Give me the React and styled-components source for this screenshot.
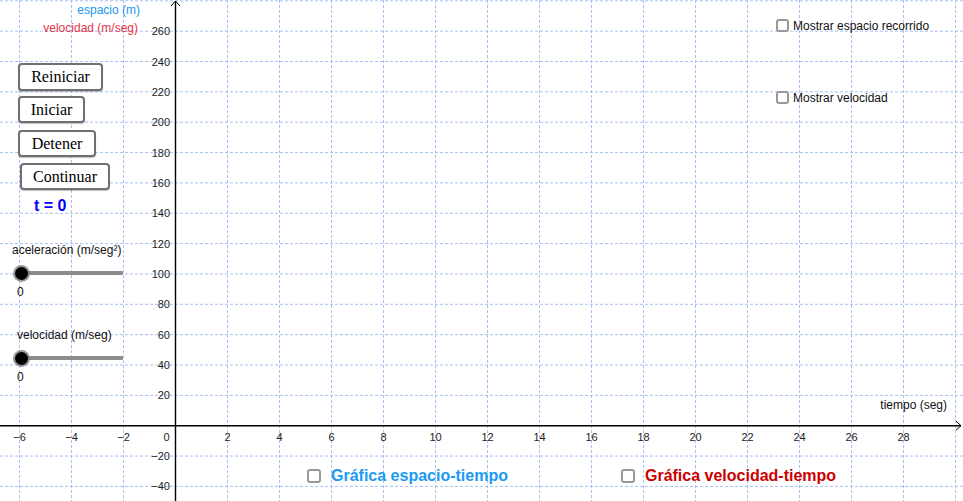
import styled, { createGlobalStyle } from "styled-components"

const GlobalStyle = createGlobalStyle`
    html, body {
        margin: 0;
        padding: 0;
        background: #ffffff;
    }
    body {
        font-family: "Liberation Sans", Arial, sans-serif;
    }
`

// graph geometry (px)
const OX = 175.5
const OY = 425.7
const X_STEP = 26      // px per second
const Y_STEP = 30.35 / 20 // px per metre

const xTicks = [-6, -4, -2, 2, 4, 6, 8, 10, 12, 14, 16, 18, 20, 22, 24, 26, 28, 30]
const yTicks = [-40, -20, 20, 40, 60, 80, 100, 120, 140, 160, 180, 200, 220, 240, 260, 280]

const fmt = (n) => (n < 0 ? "\u2212" + Math.abs(n) : String(n))

function Graph() {
    return (
        <GraphSvg width="963" height="501" viewBox="0 0 963 501">
            {xTicks.map((t) => {
                const x = OX + t * X_STEP
                return <GridLine key={"vx" + t} x1={x} y1={0} x2={x} y2={501} />
            })}
            {yTicks.map((t) => {
                const y = OY - t * Y_STEP
                return <GridLine key={"hy" + t} x1={0} y1={y} x2={963} y2={y} />
            })}

            <Axis x1={0} y1={OY} x2={961} y2={OY} />
            <Axis x1={OX} y1={1} x2={OX} y2={501} />
            <ArrowHead points={`${956},${OY - 4.5} ${961},${OY} ${956},${OY + 4.5}`} />
            <ArrowHead points={`${OX - 4.5},${6} ${OX},${1} ${OX + 4.5},${6}`} />

            {xTicks.filter((t) => t <= 28).map((t) => (
                <TickLabel key={"lx" + t} x={OX + t * X_STEP} y={441} textAnchor="middle">
                    {fmt(t)}
                </TickLabel>
            ))}
            <TickLabel x={166.5} y={441} textAnchor="middle">0</TickLabel>
            {yTicks.filter((t) => t <= 260).map((t) => (
                <TickLabel key={"ly" + t} x={170} y={OY - t * Y_STEP + 4} textAnchor="end">
                    {fmt(t)}
                </TickLabel>
            ))}

            <AxisName x={947} y={409} textAnchor="end">tiempo (seg)</AxisName>
            <AxisName x={140} y={14} textAnchor="end" fill="#2196f0">espacio (m)</AxisName>
            <AxisName x={138} y={32} textAnchor="end" fill="#e0384a">velocidad (m/seg)</AxisName>
        </GraphSvg>
    )
}

function Slider({ label, indent }) {
    return (
        <SliderBlock>
            <SliderLabel $indent={indent}>{label}</SliderLabel>
            <Track>
                <Knob />
            </Track>
            <SliderValue>0</SliderValue>
        </SliderBlock>
    )
}

function CheckItem({ children, $big, color }) {
    return (
        <CheckRow $big={$big}>
            <Box $big={$big} />
            <CheckText $big={$big} color={color}>{children}</CheckText>
        </CheckRow>
    )
}

function App() {
    return (
        <>
            <GlobalStyle />
            <Stage>
                <Graph />

                <ButtonPanel>
                    <ActionButton $w={85} $h={28}>Reiniciar</ActionButton>
                    <ActionButton $w={67} $gap={5}>Iniciar</ActionButton>
                    <ActionButton $w={78} $gap={7}>Detener</ActionButton>
                    <ActionButton $w={90} $gap={6} $shift={2}>Continuar</ActionButton>
                    <TimeText>t = 0</TimeText>
                </ButtonPanel>

                <SliderPanel>
                    <Slider label="aceleración (m/seg²)" indent={0} />
                    <Slider label="velocidad (m/seg)" indent={5} />
                </SliderPanel>

                <OptionPanel>
                    <CheckItem>Mostrar espacio recorrido</CheckItem>
                    <CheckItem>Mostrar velocidad</CheckItem>
                </OptionPanel>

                <GraphToggles>
                    <CheckItem $big color="#1a9af0">Gráfica espacio-tiempo</CheckItem>
                    <CheckItem $big color="#cc0000">Gráfica velocidad-tiempo</CheckItem>
                </GraphToggles>
            </Stage>
        </>
    )
}

const Stage = styled.div`
    position: relative;
    width: 963px;
    height: 501px;
    overflow: hidden;
    background: #ffffff;
`

const GraphSvg = styled.svg`
    position: absolute;
    left: 0;
    top: 0;
    display: block;
`

const GridLine = styled.line`
    stroke: #a9c0f2;
    stroke-width: 1;
    stroke-dasharray: 3 2;
`

const Axis = styled.line`
    stroke: #000000;
    stroke-width: 1.4;
`

const ArrowHead = styled.polyline`
    fill: none;
    stroke: #000000;
    stroke-width: 1;
`

const TickLabel = styled.text`
    font-family: "Liberation Sans", Arial, sans-serif;
    font-size: 11px;
    fill: #222222;
`

const AxisName = styled.text`
    font-family: "Liberation Sans", Arial, sans-serif;
    font-size: 12px;
    fill: ${(p) => p.fill || "#111111"};
`

const ButtonPanel = styled.div`
    position: absolute;
    left: 18px;
    top: 63px;
    display: flex;
    flex-direction: column;
    align-items: flex-start;
`

const ActionButton = styled.button`
    box-sizing: border-box;
    width: ${(p) => p.$w}px;
    height: ${(p) => p.$h || 27}px;
    margin-top: ${(p) => p.$gap || 0}px;
    margin-left: ${(p) => p.$shift || 0}px;
    padding: 0;
    background: #ffffff;
    border: 2px solid #707070;
    border-radius: 4px;
    box-shadow: 0 1px 1px rgba(0, 0, 0, 0.25);
    font-family: "Liberation Serif", "Times New Roman", serif;
    font-size: 16px;
    color: #000000;
    display: flex;
    align-items: center;
    justify-content: center;
`

const TimeText = styled.div`
    margin: 7px 0 0 16px;
    font-size: 16px;
    line-height: 18px;
    font-weight: bold;
    color: #0000ff;
`

const SliderPanel = styled.div`
    position: absolute;
    left: 12px;
    top: 243px;
    display: flex;
    flex-direction: column;
    gap: 29px;
`

const SliderBlock = styled.div`
    display: flex;
    flex-direction: column;
`

const SliderLabel = styled.div`
    margin-left: ${(p) => p.$indent}px;
    font-size: 12px;
    line-height: 14px;
    color: #111111;
`

const Track = styled.div`
    position: relative;
    margin: 14px 0 10px 9px;
    width: 102px;
    height: 4px;
    background: #8c8c8c;
    border-radius: 1px;
`

const Knob = styled.span`
    position: absolute;
    left: -6px;
    top: -4.5px;
    width: 13px;
    height: 13px;
    border-radius: 50%;
    background: #000000;
    box-shadow: 0 0 0 2px rgba(120, 120, 120, 0.75);
`

const SliderValue = styled.div`
    margin-left: 5px;
    font-size: 12px;
    line-height: 14px;
    color: #111111;
`

const OptionPanel = styled.div`
    position: absolute;
    left: 776px;
    top: 18px;
    display: flex;
    flex-direction: column;
    gap: 57px;
`

const GraphToggles = styled.div`
    position: absolute;
    left: 307px;
    top: 466px;
    display: flex;
    gap: 113px;
`

const CheckRow = styled.div`
    display: flex;
    align-items: center;
    gap: ${(p) => (p.$big ? 10 : 4)}px;
    height: ${(p) => (p.$big ? 20 : 15)}px;
`

const Box = styled.span`
    box-sizing: border-box;
    width: ${(p) => (p.$big ? 14 : 13)}px;
    height: ${(p) => (p.$big ? 14 : 13)}px;
    border: 2px solid #999999;
    border-radius: 3px;
    background: #ffffff;
`

const CheckText = styled.span`
    font-size: ${(p) => (p.$big ? 16 : 12)}px;
    font-weight: ${(p) => (p.$big ? "bold" : "normal")};
    color: ${(p) => p.color || "#111111"};
`

export default App
